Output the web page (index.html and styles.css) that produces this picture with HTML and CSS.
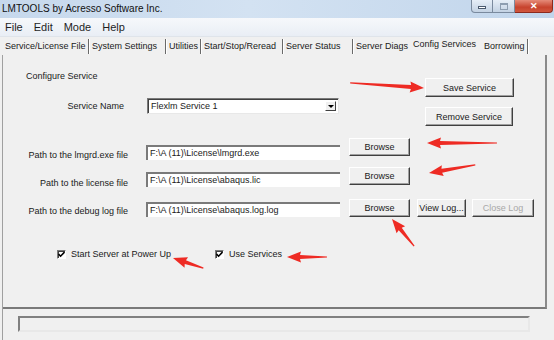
FILE: index.html
```html
<!DOCTYPE html>
<html lang="en">
<head>
    <title>LMTOOLS</title>
    <link rel="stylesheet" href="styles.css">
</head>
<body>
    <div class="window">
        <div class="titlebar">
            <span class="title">LMTOOLS by Acresso Software Inc.</span>
            <div class="controls">
                <span class="ctl min"><i></i></span>
                <span class="ctl max"><i></i></span>
                <span class="ctl close">&#x2715;</span>
            </div>
        </div>

        <div class="menubar">
            <span>File</span>
            <span>Edit</span>
            <span>Mode</span>
            <span>Help</span>
        </div>

        <div class="tabs">
            <div class="tab w1">Service/License File</div>
            <div class="tab w2">System Settings</div>
            <div class="tab w3">Utilities</div>
            <div class="tab w4">Start/Stop/Reread</div>
            <div class="tab w5">Server Status</div>
            <div class="tab w6">Server Diags</div>
            <div class="tab w7 active">Config Services</div>
            <div class="tab w8">Borrowing</div>
        </div>

        <div class="main">
            <div class="panel">
                <div class="top">
                    <div class="top-left">
                        <div class="group-title">Configure Service</div>
                        <div class="svc-row">
                            <span class="svc-label">Service Name</span>
                            <div class="combo">
                                <span class="combo-text">Flexlm Service 1</span>
                                <span class="combo-btn"><i></i></span>
                            </div>
                        </div>
                    </div>
                    <div class="top-right">
                        <button class="btn save">Save Service</button>
                        <button class="btn remove">Remove Service</button>
                    </div>
                </div>

                <div class="path-row r1">
                    <span class="path-label">Path to the lmgrd.exe file</span>
                    <div class="field">F:\A (11)\License\lmgrd.exe</div>
                    <button class="btn browse">Browse</button>
                </div>
                <div class="path-row r2">
                    <span class="path-label">Path to the license file</span>
                    <div class="field">F:\A (11)\License\abaqus.lic</div>
                    <button class="btn browse">Browse</button>
                </div>
                <div class="path-row r3">
                    <span class="path-label">Path to the debug log file</span>
                    <div class="field">F:\A (11)\License\abaqus.log.log</div>
                    <button class="btn browse">Browse</button>
                    <button class="btn viewlog">View Log...</button>
                    <button class="btn closelog" disabled>Close Log</button>
                </div>

                <div class="checks">
                    <div class="check first">
                        <span class="box"><svg width="7" height="7" viewBox="0 0 7 7"><path d="M0.5 3 L2.6 5.2 L6.5 1" fill="none" stroke="#000" stroke-width="1.6"/></svg></span>
                        Start Server at Power Up
                    </div>
                    <div class="check">
                        <span class="box"><svg width="7" height="7" viewBox="0 0 7 7"><path d="M0.5 3 L2.6 5.2 L6.5 1" fill="none" stroke="#000" stroke-width="1.6"/></svg></span>
                        Use Services
                    </div>
                </div>
            </div>

            <div class="status">
                <div class="status-box"></div>
            </div>
        </div>

        <svg class="arrows" width="554" height="340" viewBox="0 0 554 340">
            <g fill="#ee2b24">
                <!-- tip at origin, tail along -x -->
                <path transform="translate(424 88) rotate(3.9)" d="M-74 -0.6 L-13 -2 L-14 -5.5 L0 0 L-14 5.5 L-13 2 L-74 0.6 Z"/>
                <path transform="translate(427 143) rotate(180)" d="M-70 -0.6 L-13 -2 L-14 -5.5 L0 0 L-14 5.5 L-13 2 L-70 0.6 Z"/>
                <path transform="translate(429 173) rotate(170)" d="M-47 -0.6 L-13 -2 L-14 -5.5 L0 0 L-14 5.5 L-13 2 L-47 0.6 Z"/>
                <path transform="translate(392 219) rotate(230.8)" d="M-35 -0.6 L-13 -2 L-14 -5.5 L0 0 L-14 5.5 L-13 2 L-35 0.6 Z"/>
                <path transform="translate(173 258) rotate(198.4)" d="M-32 -0.6 L-13 -2 L-14 -5.5 L0 0 L-14 5.5 L-13 2 L-32 0.6 Z"/>
                <path transform="translate(287 257) rotate(180)" d="M-40 -0.6 L-13 -2 L-14 -5.5 L0 0 L-14 5.5 L-13 2 L-40 0.6 Z"/>
            </g>
        </svg>
    </div>
</body>
</html>
```

FILE: styles.css
```css
:root {
    --face: #f0f0f0;
    --shadow: #a0a0a0;
    --dark: #696969;
    --text: #1a1a1a;
}

* {
    box-sizing: border-box;
}

body {
    margin: 0;
    background-color: var(--face);
    font-family: 'Liberation Sans', Arial, sans-serif;
    color: var(--text);
}

.window {
    position: relative;
    width: 554px;
    height: 340px;
    overflow: hidden;
    background-color: var(--face);
}

/* title bar */
.titlebar {
    height: 18px;
    display: flex;
    justify-content: space-between;
    background: linear-gradient(90deg, #c6d8ec 0%, #d3e2f2 45%, #c1d5eb 100%);
}

.title {
    font-size: 10px;
    line-height: 18px;
    padding-left: 2px;
    color: #111;
}

.controls {
    display: flex;
    height: 13px;
    margin-right: 1px;
}

.ctl {
    display: flex;
    align-items: center;
    justify-content: center;
    height: 13px;
    border: 1px solid #7a8a9e;
    border-top: none;
    background: linear-gradient(#e6eef7, #c3d2e3);
}

.ctl.min {
    width: 22px;
    border-radius: 0 0 0 4px;
}

.ctl.min i {
    width: 8px;
    height: 3px;
    border: 1px solid #4a5a6e;
    background-color: #fff;
    margin-top: 2px;
}

.ctl.max {
    width: 22px;
    border-left: none;
}

.ctl.max i {
    width: 8px;
    height: 7px;
    border: 1px solid #8d9db0;
    border-top-width: 2px;
}

.ctl.close {
    width: 38px;
    border-left: none;
    border-color: #8c2a1e;
    border-radius: 0 0 4px 0;
    background: linear-gradient(#e58b79, #c7432d 60%, #d1573e);
    color: #fff;
    font-size: 9px;
    font-weight: bold;
}

/* menu */
.menubar {
    height: 19px;
    display: flex;
    gap: 11px;
    padding-left: 5px;
    align-items: center;
    font-size: 11px;
    background: linear-gradient(#f6f8fb, #e9eef5);
    border-bottom: 1px solid #dfe4ea;
    color: #1e1e1e;
}

/* tabs */
.tabs {
    height: 18px;
    display: flex;
    padding-left: 2px;
    font-size: 9px;
    align-items: flex-end;
}

.tab {
    height: 15px;
    line-height: 14px;
    padding-left: 3px;
    margin-bottom: 1px;
    white-space: nowrap;
    border-right: 1px solid var(--dark);
    box-shadow: 1px 0 0 #fff;
}

.tab.active {
    height: 17px;
    line-height: 13px;
    margin-bottom: 0;
    border-right: none;
    box-shadow: none;
    padding-left: 5px;
}

.w1 { width: 87px; }
.w2 { width: 77px; }
.w3 { width: 35px; }
.w4 { width: 82px; }
.w5 { width: 70px; }
.w6 { width: 55px; border-right: none; box-shadow: none; }
.w7 { width: 73px; }
.w8 { width: 47px; }

/* tab page */
.main {
    margin-left: 2px;
    border-left: 1px solid var(--shadow);
    height: 285px;
}

.panel {
    width: 544px;
    height: 254px;
    border-right: 2px solid #8a8a8a;
    border-bottom: 2px solid #7a7a7a;
    font-size: 9px;
}

.top {
    display: flex;
    height: 83px;
}

.top-left {
    width: 422px;
    padding-left: 23px;
    padding-top: 15px;
}

.group-title {
    height: 12px;
    line-height: 12px;
}

.svc-row {
    display: flex;
    align-items: center;
    margin-top: 16px;
}

.svc-label {
    width: 98px;
    text-align: right;
}

.combo {
    margin-left: 23px;
    width: 192px;
    height: 16px;
    display: flex;
    align-items: center;
    justify-content: space-between;
    background-color: #fff;
    border: 1px solid;
    border-color: #7a7a7a #e8e8e8 #e8e8e8 #7a7a7a;
    box-shadow: inset 1px 1px 0 #404040;
    padding-left: 3px;
}

.combo-btn {
    width: 11px;
    height: 10px;
    margin-right: 2px;
    display: flex;
    align-items: center;
    justify-content: center;
    background-color: var(--face);
    border: 1px solid;
    border-color: #fff #404040 #404040 #fff;
}

.combo-btn i {
    width: 0;
    height: 0;
    border-left: 3px solid transparent;
    border-right: 3px solid transparent;
    border-top: 3px solid #000;
}

.top-right {
    display: flex;
    flex-direction: column;
    gap: 10px;
    padding-top: 23px;
}

.btn {
    font-family: 'Liberation Sans', Arial, sans-serif;
    font-size: 9px;
    color: var(--text);
    height: 19px;
    padding: 0;
    background-color: var(--face);
    border: 1px solid;
    border-color: #fff #404040 #404040 #fff;
    box-shadow: inset -1px -1px 0 var(--shadow);
}

.btn.save { width: 89px; }
.btn.remove { width: 88px; }

/* path rows */
.path-row {
    display: flex;
    align-items: flex-start;
}

.path-row.r1 { height: 29px; }
.path-row.r2 { height: 32px; }
.path-row.r3 { height: 18px; }

.path-label {
    width: 125px;
    text-align: right;
    line-height: 11px;
}

.r1 .path-label { margin-top: 12px; }
.r2 .path-label { margin-top: 11px; }
.r3 .path-label { margin-top: 7px; }

.field {
    margin-left: 18px;
    width: 194px;
    height: 15px;
    line-height: 13px;
    padding-left: 2px;
    white-space: nowrap;
    overflow: hidden;
    background-color: #fff;
    border-top: 2px solid #7a7a7a;
    border-left: 2px solid #7a7a7a;
}

.r1 .field { margin-top: 7px; }
.r2 .field { margin-top: 5px; }
.r3 .field { margin-top: 3px; }

.btn.browse {
    margin-left: 9px;
    width: 61px;
    height: 18px;
}

.btn.viewlog {
    margin-left: 7px;
    width: 49px;
    height: 18px;
}

.btn.closelog {
    margin-left: 6px;
    width: 62px;
    height: 18px;
    color: #a8a8a8;
}

/* checkboxes */
.checks {
    display: flex;
    margin-top: 31px;
    padding-left: 54px;
    height: 12px;
    align-items: center;
}

.check {
    display: flex;
    align-items: center;
    gap: 5px;
}

.check.first {
    width: 158px;
}

.box {
    width: 9px;
    height: 9px;
    display: flex;
    align-items: center;
    justify-content: center;
    background-color: #fff;
    border: 1px solid;
    border-color: #7a7a7a #fff #fff #7a7a7a;
    box-shadow: inset 1px 1px 0 #404040;
}

/* status bar */
.status {
    padding: 7px 0 0 15px;
}

.status-box {
    width: 512px;
    height: 16px;
    border: 2px solid;
    border-color: #808080 #e8e8e8 #e8e8e8 #808080;
}

/* annotation arrows over the window */
.arrows {
    position: absolute;
    left: 0;
    top: 0;
    pointer-events: none;
}
```
